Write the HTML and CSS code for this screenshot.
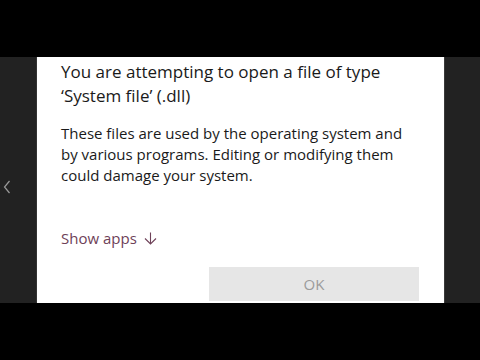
FILE: index.html
```html
<!DOCTYPE html>
<html lang="en">
<head>
    <meta charset="UTF-8">
    <title>Open file warning</title>
    <link rel="stylesheet" href="styles.css">
</head>
<body>
    <div class="top-bar"></div>
    <div class="stage">
        <div class="side side-left">
            <svg class="chevron" width="8" height="14" viewBox="0 0 8 14">
                <path d="M6.5 1 L1.5 7 L6.5 13" fill="none" stroke="#9a9a9a" stroke-width="1.2"/>
            </svg>
        </div>
        <div class="dialog">
            <h1 class="title">You are attempting to open a file of type ‘System file’ (.dll)</h1>
            <p class="message">These files are used by the operating system and by various programs. Editing or modifying them could damage your system.</p>
            <a class="show-apps" href="#">Show apps
                <svg class="arrow" width="13" height="13" viewBox="0 0 13 13">
                    <path d="M6.5 0.5 V12 M1 6.5 L6.5 12 L12 6.5" fill="none" stroke="#6e4158" stroke-width="1.1"/>
                </svg>
            </a>
            <div class="actions">
                <button class="ok-button" disabled>OK</button>
            </div>
        </div>
        <div class="side side-right"></div>
    </div>
</body>
</html>
```
FILE: styles.css
```css
html, body {
    margin: 0;
    padding: 0;
    background-color: #000;
    font-family: "Open Sans", "Noto Sans", sans-serif;
}
.top-bar {
    height: 57px;
}
.stage {
    display: flex;
    height: 246px;
}
.side {
    background-color: #222;
}
.side-left {
    width: 37px;
    border-right: 1px solid #333;
    display: flex;
    align-items: center;
    padding-left: 3px;
    box-sizing: border-box;
}
.chevron {
    margin-top: 14px;
}
.side-right {
    flex: 1;
    border-left: 1px solid #3a3a3a;
}
.dialog {
    width: 407px;
    background-color: #fff;
    padding: 3px 24px 0 24px;
    box-sizing: border-box;
    display: flex;
    flex-direction: column;
}
.title {
    margin: 0;
    font-size: 17px;
    font-weight: normal;
    line-height: 24px;
    color: #1a1a1a;
    width: 340px;
}
.message {
    margin: 15px 0 0 0;
    font-size: 15px;
    line-height: 21px;
    color: #1a1a1a;
    width: 345px;
}
.show-apps {
    margin-top: 42px;
    font-size: 15px;
    color: #6e4158;
    text-decoration: none;
    display: flex;
    align-items: center;
    gap: 7px;
}
.arrow {
    margin-top: 1px;
}
.actions {
    display: flex;
    justify-content: flex-end;
    margin-top: auto;
    margin-right: 1px;
    padding-bottom: 2px;
}
.ok-button {
    width: 210px;
    height: 34px;
    border: none;
    background-color: #e6e6e6;
    color: #9b9b9b;
    font-family: "Open Sans", "Noto Sans", sans-serif;
    font-size: 15px;
}
```
